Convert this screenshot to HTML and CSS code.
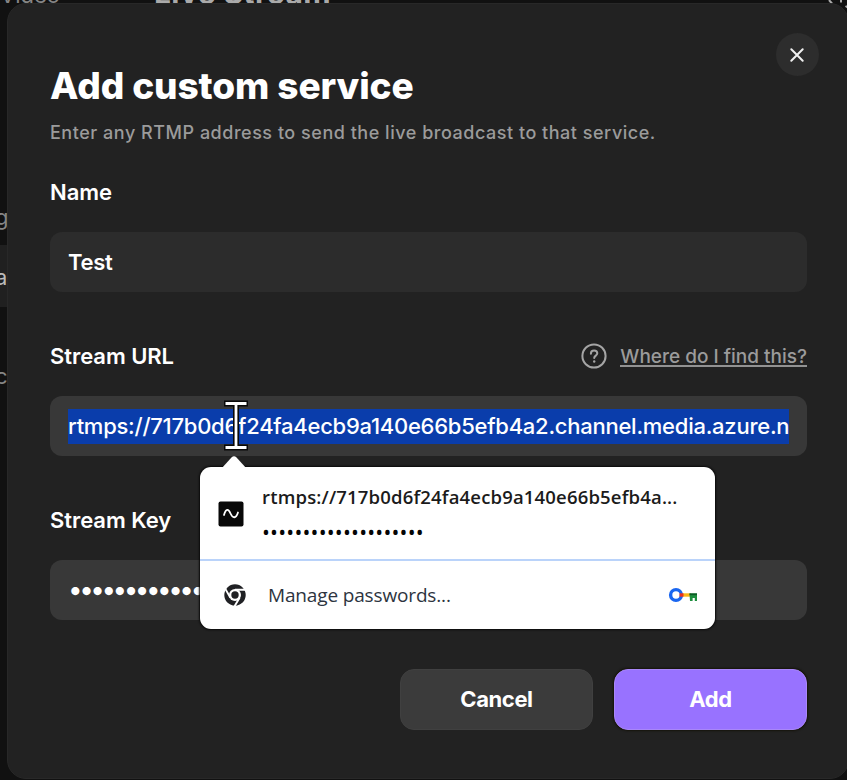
FILE: index.html
```html
<!DOCTYPE html>
<html lang="en">
<head>
<meta charset="utf-8">
<title>Add custom service</title>
<link rel="stylesheet" href="styles.css">
</head>
<body>
<div class="page" aria-hidden="true">
  <span class="page-text page-nav">Video</span>
  <span class="page-text page-title">Live Stream</span>
  <span class="page-text page-item-1">g</span>
  <span class="page-active"></span>
  <span class="page-text page-item-2">a</span>
  <span class="page-text page-item-3">c</span>
  <svg class="page-gear" viewBox="0 0 22 14"><path d="M1 0l3 3.500M13 0v2.500M17.500 6l3 2" fill="none" stroke="#aaa" stroke-width="2"/></svg>
</div>
<main class="modal">
  <button class="close" aria-label="Close"><svg viewBox="0 0 14 14"><path d="M1.300 1.300l11.400 11.400M12.700 1.300L1.300 12.700"/></svg></button>
  <h1 class="title">Add custom service</h1>
  <p class="subtitle">Enter any RTMP address to send the live broadcast to that service.</p>

  <section class="group">
    <div class="label-row"><label class="label label-name">Name</label></div>
    <div class="field field-name"><span class="value">Test</span></div>
  </section>

  <section class="group">
    <div class="label-row">
      <label class="label label-url">Stream URL</label>
      <a class="help">
        <svg viewBox="0 0 26 26"><circle cx="13" cy="13" r="11.6"/><path d="M9.9 10.7c0-2 1.3-3.2 3.2-3.2s3.2 1.1 3.2 2.8c0 2.3-3.1 2.3-3.1 4.8"/><path class="dot" d="M13.2 18.4v.1"/></svg>
        <span class="help-text">Where do I find this?</span>
      </a>
    </div>
    <div class="field">
      <span class="selection"><span class="url">rtmps://717b0d6f24fa4ecb9a140e66b5efb4a2.channel.media.azure.net</span></span>
      <svg class="ibeam" viewBox="0 0 26 52">
        <path class="outline" d="M1 3.500h24M1 47.500h24M13 3v45"/>
        <path class="inner" d="M2.500 3.500h21M2.500 47.500h21M13 3v45"/>
      </svg>
      <div class="popup">
        <svg class="popup-arrow" viewBox="0 0 26 14"><path d="M0 14L10.500 2.600Q13 0 15.500 2.600L26 14z"/></svg>
        <div class="account">
          <svg class="site-icon" viewBox="0 0 26 26"><rect x=".5" y=".5" width="25" height="25" rx="2"/><path d="M6 14C8 7.500 10.300 7.500 12.500 12.500S18 17.800 20 11.500"/></svg>
          <div class="account-text">
            <span class="account-url">rtmps://717b0d6f24fa4ecb9a140e66b5efb4a...</span>
            <span class="account-dots">••••••••••••••••••••</span>
          </div>
        </div>
        <div class="manage">
          <svg class="chrome" viewBox="0 0 22 22">
            <circle cx="11" cy="11" r="10.700" fill="#202124"/>
            <circle cx="11" cy="11" r="6" fill="#fff"/>
            <path d="M11 5.700H21.500M6.400 13.700L1.200 4.600M15.600 13.700L10.400 22.500" stroke="#fff" stroke-width="1.900"/>
            <circle cx="11" cy="11" r="3.700" fill="#202124"/>
          </svg>
          <span class="manage-text">Manage passwords...</span>
          <svg class="key" viewBox="0 0 30 16">
            <path d="M13 8h10" stroke="#fbb61a" stroke-width="3.400"/>
            <circle cx="8" cy="8" r="5.400" fill="none" stroke="#1a66f0" stroke-width="3.400"/>
            <path d="M11.500 8h4" stroke="#ea3323" stroke-width="3.400"/>
            <path d="M21.500 6.400H29V14h-2.200v-3h-2.200v3h-2.600z" fill="#1e8e3e"/>
            <path d="M21.500 6.400H29v1.800h-7.500z" fill="#0b5b25"/>
          </svg>
        </div>
      </div>
    </div>
  </section>

  <section class="group">
    <div class="label-row"><label class="label label-key">Stream Key</label></div>
    <div class="field"><span class="secret">••••••••••••</span></div>
  </section>

  <div class="actions">
    <button class="btn btn-cancel"><span class="cancel-text">Cancel</span></button>
    <button class="btn btn-add"><span class="add-text">Add</span></button>
  </div>
</main>
</body>
</html>
```
FILE: styles.css
```css
* { box-sizing: border-box; }
html, body { margin: 0; height: 100%; overflow: hidden; }
body {
  position: relative;
  background: #111;
  font-family: Inter, "Liberation Sans", sans-serif;
  color: #fff;
}
button { border: 0; padding: 0; font: inherit; color: inherit; }
svg { display: block; overflow: visible; }

/* page behind the dialog */
.page { position: absolute; inset: 0; overflow: hidden; }
.page-text { position: absolute; color: #868686; font-size: 22px; line-height: 26px; white-space: nowrap; }
.page-nav { left: 0; top: -18px; }
.page-title { left: 154px; top: -25px; font-size: 30px; line-height: 36px; font-weight: 700; letter-spacing: 0.4px; color: #aaa; }
.page-item-1 { left: -5px; top: 204px; }
.page-item-2 { left: -5px; top: 264px; color: #bbb; }
.page-item-3 { left: -5px; top: 363px; }
.page-active { position: absolute; left: 0; top: 245px; width: 20px; height: 62px; background: #202020; }
.page-gear { position: absolute; left: 828px; top: 0; width: 22px; height: 14px; }

.modal {
  position: relative;
  width: 842px;
  height: 776px;
  margin: 3px 0 0 7px;
  padding: 60px 42px 0;
  background: #222;
  border: 1px solid #282828;
  border-radius: 19px;
}
.close {
  position: absolute;
  left: 768px;
  top: 29px;
  width: 43px;
  height: 43px;
  border-radius: 50%;
  background: #2d2d2d;
  display: flex;
  align-items: center;
  justify-content: center;
}
.close svg { width: 14px; height: 14px; margin-right: 1px; }
.close path { stroke: #f0f0f0; stroke-width: 2; stroke-linecap: round; }

.title { margin: 0; height: 44px; font-size: 37px; line-height: 44px; font-weight: 800; letter-spacing: -0.1px; white-space: nowrap; }
.subtitle { margin: 13px 0 32px; height: 24px; font-size: 18px; line-height: 24px; font-weight: 500; letter-spacing: 0.52px; color: #9b9b9b; white-space: nowrap; }

.group { width: 757px; margin-bottom: 49px; }
.label-row { display: flex; justify-content: space-between; align-items: center; height: 30px; margin-bottom: 25px; }
.label { font-size: 22px; line-height: 30px; font-weight: 600; letter-spacing: -0.05px; white-space: nowrap; }
.help { display: flex; align-items: center; gap: 13px; color: #9b9b9b; }
.help svg { width: 26px; height: 26px; fill: none; stroke: #a5a5a5; stroke-width: 2; stroke-linecap: round; }
.help .dot { stroke-width: 2.4; }
.help-text { font-size: 19px; line-height: 23px; font-weight: 500; border-bottom: 2px solid #929292; height: 22px; white-space: nowrap; }

.field {
  position: relative;
  display: flex;
  align-items: center;
  height: 60px;
  padding: 0 18px;
  border-radius: 12px;
  background: #383838;
}
.field-name { background: #2c2c2c; }
.value { font-size: 22px; line-height: 30px; font-weight: 600; letter-spacing: -0.3px; }
.selection { width: 721px; height: 35px; overflow: hidden; background: #0a3dab; white-space: nowrap; line-height: 35px; }
.url { font-size: 22px; font-weight: 500; letter-spacing: -0.25px; }
.secret { font-size: 26px; line-height: 30px; letter-spacing: -3.5px; white-space: nowrap; }

/* text cursor hovering the field */
.ibeam { position: absolute; left: 173px; top: 4px; width: 26px; height: 52px; fill: none; }
.ibeam .outline { stroke: #090909; stroke-width: 6; }
.ibeam .inner { stroke: #fff; stroke-width: 2.8; }

.popup {
  position: absolute;
  z-index: 2;
  left: 150px;
  top: 71px;
  width: 515px;
  height: 162px;
  border-radius: 11px;
  background: #fff;
  box-shadow: 0 0 2px 1px #090909;
  color: #202124;
  font-family: "Open Sans", "Noto Sans", sans-serif;
}
.popup-arrow { position: absolute; left: 21px; top: -12px; width: 26px; height: 14px; fill: #fff; }
.account { display: flex; height: 94px; padding: 16px 0 0 18px; border-bottom: 2px solid #bad3fa; }
.site-icon { width: 26px; height: 26px; margin: 18px 18px 0 0; }
.site-icon rect { fill: #080808; }
.site-icon path { fill: none; stroke: #fff; stroke-width: 1.8; stroke-linecap: round; }
.account-text { display: flex; flex-direction: column; gap: 7px; }
.account-url { font-size: 18.5px; line-height: 28px; font-weight: 600; letter-spacing: 0.17px; color: #1b1b1b; white-space: nowrap; }
.account-dots { font-size: 21px; line-height: 28px; letter-spacing: 0.2px; color: #050505; white-space: nowrap; }
.manage { display: flex; align-items: center; height: 68px; padding: 0 17px 0 24px; }
.chrome { width: 22px; height: 22px; margin-right: 22px; }
.manage-text { flex: 1; font-size: 19px; line-height: 28px; letter-spacing: -0.15px; color: #2d3440; white-space: nowrap; }
.key { width: 30px; height: 16px; }

.actions { display: flex; justify-content: flex-end; gap: 21px; width: 757px; }
.btn { width: 193px; height: 61px; padding-bottom: 2px; border-radius: 14px; font-size: 22px; line-height: 30px; font-weight: 700; letter-spacing: -0.4px; }
.btn-cancel { background: #3b3b3b; border: 1px solid #404040; }
.btn-add { background: #9872ff; border: 1px solid #a987f8; box-shadow: 0 0 2px 1px #15130a; }
```
